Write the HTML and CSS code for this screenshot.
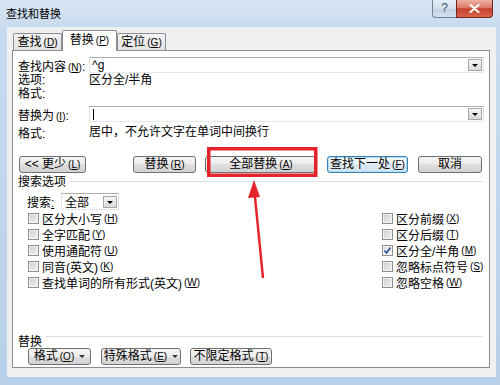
FILE: index.html
```html
<!DOCTYPE html>
<html>
<head>
  <meta charset="utf-8">
  <title>查找和替换</title>
  <link rel="stylesheet" href="styles.css">
</head>
<body>
  <div class="window">
    <div class="titlebar">
      <span class="title">查找和替换</span>
      <div class="caption-btns">
        <span class="btn-help">?</span>
        <span class="btn-close">
          <svg width="11" height="9" viewBox="0 0 11 9"><path d="M1.5 1 L9.5 8 M9.5 1 L1.5 8" stroke="#fff" stroke-width="2.2" stroke-linecap="round"/></svg>
        </span>
      </div>
    </div>

    <div class="client">
      <div class="tabs">
        <div class="tab">查找<span class="key">(<u>D</u>)</span></div>
        <div class="tab active">替换<span class="key">(<u>P</u>)</span></div>
        <div class="tab">定位<span class="key">(<u>G</u>)</span></div>
      </div>

      <div class="panel">
        <div class="row row-input">
          <span class="lbl">查找内容<span class="key">(<u>N</u>)</span>:</span>
          <div class="combo"><span class="combo-text">^g</span><span class="drop"></span></div>
        </div>
        <div class="row row-info"><span class="lbl">选项:</span><span>区分全/半角</span></div>
        <div class="row row-info"><span class="lbl">格式:</span></div>
        <div class="row row-input second">
          <span class="lbl">替换为<span class="key">(<u>I</u>)</span>:</span>
          <div class="combo"><span class="combo-text"><span class="caret"></span></span><span class="drop"></span></div>
        </div>
        <div class="row row-format"><span class="lbl lbl-low">格式:</span><span>居中，不允许文字在单词中间换行</span></div>

        <div class="button-row">
          <button class="btn btn-less">&lt;&lt; 更少<span class="key">(<u>L</u>)</span></button>
          <button class="btn btn-replace">替换<span class="key">(<u>R</u>)</span></button>
          <button class="btn btn-all">全部替换<span class="key">(<u>A</u>)</span></button>
          <button class="btn btn-next">查找下一处<span class="key">(<u>F</u>)</span></button>
          <button class="btn btn-cancel">取消</button>
        </div>

        <div class="group-head"><span>搜索选项</span><i class="rule"></i></div>

        <div class="search-row">
          <span class="search-lbl">搜索<u>:</u></span>
          <div class="select"><span class="select-text">全部</span><span class="drop"></span></div>
        </div>

        <div class="options">
          <div class="col col-left">
            <div class="check"><span class="box"></span>区分大小写<span class="key">(<u>H</u>)</span></div>
            <div class="check"><span class="box"></span>全字匹配<span class="key">(<u>Y</u>)</span></div>
            <div class="check"><span class="box"></span>使用通配符<span class="key">(<u>U</u>)</span></div>
            <div class="check"><span class="box"></span>同音(英文)<span class="key">(<u>K</u>)</span></div>
            <div class="check"><span class="box"></span>查找单词的所有形式(英文)<span class="key">(<u>W</u>)</span></div>
          </div>
          <div class="col col-right">
            <div class="check"><span class="box"></span>区分前缀<span class="key">(<u>X</u>)</span></div>
            <div class="check"><span class="box"></span>区分后缀<span class="key">(<u>T</u>)</span></div>
            <div class="check"><span class="box checked"><svg width="9" height="9" viewBox="0 0 9 9"><path d="M1.5 4.5 L3.5 7 L7.5 1.5" fill="none" stroke="#2a4f8f" stroke-width="1.6"/></svg></span>区分全/半角<span class="key">(<u>M</u>)</span></div>
            <div class="check"><span class="box"></span>忽略标点符号<span class="key">(<u>S</u>)</span></div>
            <div class="check"><span class="box"></span>忽略空格<span class="key">(<u>W</u>)</span></div>
          </div>
        </div>

        <div class="group-head replace-head"><span>替换</span><i class="rule"></i></div>

        <div class="button-row bottom-row">
          <button class="btn btn-format">格式<span class="key">(<u>O</u>)</span><span class="menu-caret"></span></button>
          <button class="btn btn-special">特殊格式<span class="key">(<u>E</u>)</span><span class="menu-caret"></span></button>
          <button class="btn btn-clear">不限定格式<span class="key">(<u>T</u>)</span></button>
        </div>
      </div>
    </div>

    <!-- 标注：红框和箭头 -->
    <svg class="annotation" width="500" height="385" viewBox="0 0 500 385">
      <rect x="208.75" y="148.75" width="107" height="26.5" fill="none" stroke="#e5232a" stroke-width="3.5"/>
      <line x1="263" y1="278" x2="254.5" y2="192" stroke="#e5232a" stroke-width="2.5"/>
      <polygon points="254,180 248,198 260,197" fill="#e5232a"/>
    </svg>
  </div>
</body>
</html>
```

FILE: styles.css
```css
/* 查找和替换 对话框 */
* {
  box-sizing: border-box;
}

body {
  margin: 0;
  font-family: "Liberation Sans", "Noto Sans CJK SC", sans-serif;
  font-size: 12px;
  color: #000;
}

u {
  text-decoration-thickness: 1px;
  text-underline-offset: 1px;
}

.window {
  position: relative;
  width: 500px;
  height: 385px;
  overflow: hidden;
  background: linear-gradient(180deg, #dae6f4 0px, #c8dbef 27px, #b9d0ea 385px);
}

/* 标题栏 */
.titlebar {
  height: 27px;
  display: flex;
  align-items: flex-start;
  padding-left: 6px;
}

.title {
  font-size: 11px;
  line-height: 28px;
}

.caption-btns {
  margin-left: auto;
  margin-right: 7px;
  display: flex;
}

.btn-help {
  width: 24px;
  height: 18px;
  border: 1px solid #70829a;
  border-top: none;
  border-right: none;
  border-radius: 0 0 0 4px;
  background: linear-gradient(#e6eef7, #d1deec 50%, #bfd0e3 51%, #d3e0ee);
  color: #45556b;
  font-size: 12px;
  line-height: 17px;
  text-align: center;
}

.btn-close {
  width: 37px;
  height: 18px;
  border: 1px solid #6b2a20;
  border-top: none;
  border-radius: 0 0 4px 0;
  background: linear-gradient(#eeb0a2, #dc7a66 45%, #c7402c 52%, #d8644c);
  display: flex;
  align-items: center;
  justify-content: center;
}

/* 客户区 */
.client {
  margin-left: 7px;
  width: 489px;
  height: 350px;
  background: #f0f0f0;
  padding: 3px 6px 9px 5px;
}

.tabs {
  display: flex;
  align-items: flex-end;
  height: 20px;
  padding-left: 1px;
  position: relative;
  z-index: 1;
}

.tab {
  width: 49px;
  height: 17px;
  border: 1px solid #898c95;
  border-bottom: none;
  border-radius: 2px 2px 0 0;
  background: linear-gradient(#f3f3f3, #e3e3e3);
  text-align: center;
  line-height: 16px;
}

.tab.active {
  width: 55px;
  height: 21px;
  margin-bottom: -1px;
  background: #fff;
  line-height: 19px;
}

.key {
  font-size: 10px;
  margin-left: 2px;
}

.panel {
  height: 318px;
  border: 1px solid #898c95;
  background: #fff;
  display: flex;
  flex-direction: column;
  padding-bottom: 2px;
}

.row {
  display: flex;
  align-items: center;
  padding-left: 5px;
}

.lbl {
  width: 71px;
  flex: none;
}

.row-input {
  height: 16px;
  margin-top: 6px;
}

.row-input.second {
  margin-top: 5px;
}

.row-info {
  height: 14px;
  line-height: 14px;
}

.row-format {
  height: 20px;
  line-height: 20px;
}

.lbl-low {
  padding-top: 4px;
}

.combo {
  width: 395px;
  height: 16px;
  border: 1px solid;
  border-color: #abadb3 #dbdfe6 #e3e9ef #e2e3ea;
  background: #fff;
  display: flex;
  align-items: center;
}

.combo-text {
  flex: 1;
  padding-left: 2px;
  line-height: 14px;
  display: flex;
  align-items: center;
}

.caret {
  display: inline-block;
  width: 1px;
  height: 11px;
  margin-left: 1px;
  background: #000;
}

.drop {
  position: relative;
  width: 14px;
  height: 12px;
  margin-right: 1px;
  border: 1px solid #a7a7a7;
  background: linear-gradient(#f6f6f6, #dadada);
}

.drop::after {
  content: "";
  position: absolute;
  left: 3px;
  top: 4px;
  border-left: 3px solid transparent;
  border-right: 3px solid transparent;
  border-top: 3px solid #000;
}

/* 按钮 */
.button-row {
  display: flex;
  margin-top: 14px;
  padding-left: 6px;
}

.btn {
  height: 17px;
  padding: 0;
  border: 1px solid #707070;
  border-radius: 3px;
  background: linear-gradient(#f4f4f4 0, #ececec 50%, #dfdfdf 50%, #d2d2d2 100%);
  font: inherit;
  line-height: 15px;
  color: #000;
}

.btn-less { width: 67px; }
.btn-replace { width: 63px; margin-left: 47px; }
.btn-all { width: 112px; margin-left: 9px; }
.btn-next {
  width: 81px;
  margin-left: 10px;
  border-color: #3c7fb1;
  box-shadow: inset 0 0 0 1px #aee0f8;
  background: linear-gradient(#f4f9fc 0, #ebf3f8 50%, #dde9f1 50%, #d3e2ec 100%);
}
.btn-cancel { width: 64px; margin-left: 10px; }

/* 分组标题 */
.group-head {
  display: flex;
  align-items: center;
  height: 14px;
  margin-top: 2px;
  padding: 0 6px 0 5px;
  line-height: 14px;
}

.rule {
  flex: 1;
  height: 1px;
  margin: -2px 0 0 4px;
  background: #d5dfe5;
}

.search-row {
  display: flex;
  align-items: center;
  height: 17px;
  margin-top: 4px;
  padding-left: 14px;
}

.search-lbl {
  width: 34px;
}

.select {
  width: 58px;
  height: 17px;
  border: 1px solid;
  border-color: #abadb3 #dbdfe6 #e3e9ef #e2e3ea;
  display: flex;
  align-items: center;
}

.select-text {
  flex: 1;
  padding-left: 3px;
}

/* 复选框 */
.options {
  display: flex;
}

.col-left {
  width: 369px;
  padding-left: 15px;
}

.check {
  display: flex;
  align-items: center;
  height: 16px;
}

.box {
  width: 11px;
  height: 11px;
  margin-right: 3px;
  border: 1px solid #8e8f8f;
  background: linear-gradient(135deg, #c9cdd2, #f3f3f3);
  box-shadow: inset 0 0 0 1px #f4f4f4;
  display: flex;
  align-items: center;
  justify-content: center;
}

.box.checked {
  background: linear-gradient(135deg, #dde1e6, #f7f7f7);
}

.replace-head {
  margin-top: auto;
  align-items: flex-start;
  height: 12px;
  line-height: 12px;
}

.replace-head .rule {
  margin-top: 0;
}

.bottom-row {
  margin-top: 0;
  padding-left: 15px;
}

.btn-format { width: 63px; }
.btn-special { width: 80px; margin-left: 10px; }
.btn-clear { width: 82px; margin-left: 9px; }

.menu-caret {
  display: inline-block;
  margin-left: 5px;
  vertical-align: middle;
  border-left: 3px solid transparent;
  border-right: 3px solid transparent;
  border-top: 3px solid #333;
}

.annotation {
  position: absolute;
  left: 0;
  top: 0;
  pointer-events: none;
}
```
